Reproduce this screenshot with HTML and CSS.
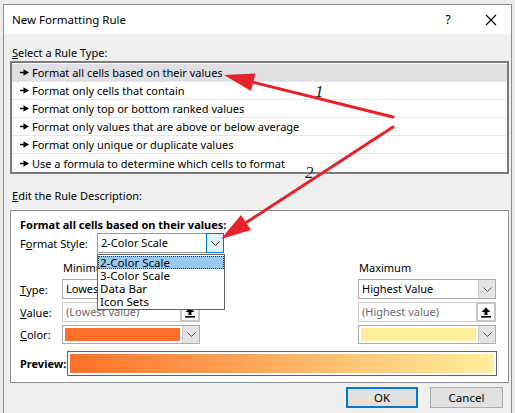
FILE: index.html
```html
<!DOCTYPE html>
<html>
<head>
<meta charset="utf-8">
<link rel="stylesheet" href="styles.css">
</head>
<body>
<div class="dialog">
  <div class="titlebar">
    <span class="title">New Formatting Rule</span>
    <span class="help">?</span>
    <span class="close"><svg width="12" height="12" viewBox="0 0 12 12"><path d="M1 1L11 11M11 1L1 11" stroke="#000" stroke-width="1.1" fill="none"/></svg></span>
  </div>
  <div class="content">
    <div class="section-label"><u>S</u>elect a Rule Type:</div>
    <div class="listbox">
      <div class="item selected"><svg class="bullet" width="9" height="7" viewBox="0 0 9 7"><path d="M0 3.5H4.5" stroke="#000" stroke-width="1.5"/><path d="M3.5 0.3L9 3.5L3.5 6.7Z" fill="#000"/></svg>Format all cells based on their values</div>
      <div class="item"><svg class="bullet" width="9" height="7" viewBox="0 0 9 7"><path d="M0 3.5H4.5" stroke="#000" stroke-width="1.5"/><path d="M3.5 0.3L9 3.5L3.5 6.7Z" fill="#000"/></svg>Format only cells that contain</div>
      <div class="item"><svg class="bullet" width="9" height="7" viewBox="0 0 9 7"><path d="M0 3.5H4.5" stroke="#000" stroke-width="1.5"/><path d="M3.5 0.3L9 3.5L3.5 6.7Z" fill="#000"/></svg>Format only top or bottom ranked values</div>
      <div class="item"><svg class="bullet" width="9" height="7" viewBox="0 0 9 7"><path d="M0 3.5H4.5" stroke="#000" stroke-width="1.5"/><path d="M3.5 0.3L9 3.5L3.5 6.7Z" fill="#000"/></svg>Format only values that are above or below average</div>
      <div class="item"><svg class="bullet" width="9" height="7" viewBox="0 0 9 7"><path d="M0 3.5H4.5" stroke="#000" stroke-width="1.5"/><path d="M3.5 0.3L9 3.5L3.5 6.7Z" fill="#000"/></svg>Format only unique or duplicate values</div>
      <div class="item last"><svg class="bullet" width="9" height="7" viewBox="0 0 9 7"><path d="M0 3.5H4.5" stroke="#000" stroke-width="1.5"/><path d="M3.5 0.3L9 3.5L3.5 6.7Z" fill="#000"/></svg>Use a formula to determine which cells to format</div>
    </div>
    <div class="section-label edit"><u>E</u>dit the Rule Description:</div>
    <div class="group">
      <div class="heading">Format all cells based on their values:</div>
      <div class="style-row">
        <span class="style-label">F<u>o</u>rmat Style:</span>
        <div class="combo style-combo">
          <span class="combo-text">2-Color Scale</span>
          <span class="ddbtn active"><svg width="9" height="5" viewBox="0 0 9 5"><path d="M0.5 0.5L4.5 4.5L8.5 0.5" stroke="#333" fill="none"/></svg></span>
          <div class="droplist">
            <div class="opt sel">2-Color Scale</div>
            <div class="opt">3-Color Scale</div>
            <div class="opt">Data Bar</div>
            <div class="opt">Icon Sets</div>
          </div>
        </div>
      </div>
      <div class="grid">
        <span></span><span class="colhead">Minimum</span><span></span><span class="colhead">Maximum</span>

        <span class="rowlabel"><u>T</u>ype:</span>
        <div class="combo"><span class="combo-text">Lowest Value</span><span class="ddbtn"><svg width="9" height="5" viewBox="0 0 9 5"><path d="M0.5 0.5L4.5 4.5L8.5 0.5" stroke="#555" fill="none"/></svg></span></div>
        <span></span>
        <div class="combo"><span class="combo-text">Highest Value</span><span class="ddbtn"><svg width="9" height="5" viewBox="0 0 9 5"><path d="M0.5 0.5L4.5 4.5L8.5 0.5" stroke="#555" fill="none"/></svg></span></div>

        <span class="rowlabel"><u>V</u>alue:</span>
        <div class="valuebox"><span class="value-text">(Lowest value)</span><span class="refbtn"><svg width="10" height="11" viewBox="0 0 10 11"><path d="M5 0.5L9.5 5H6.5V8H3.5V5H0.5Z" fill="#000"/><rect x="0" y="9" width="10" height="1.6" fill="#000"/></svg></span></div>
        <span></span>
        <div class="valuebox"><span class="value-text">(Highest value)</span><span class="refbtn"><svg width="10" height="11" viewBox="0 0 10 11"><path d="M5 0.5L9.5 5H6.5V8H3.5V5H0.5Z" fill="#000"/><rect x="0" y="9" width="10" height="1.6" fill="#000"/></svg></span></div>

        <span class="rowlabel"><u>C</u>olor:</span>
        <div class="combo colorcombo"><span class="swatch orange"></span><span class="ddbtn"><svg width="9" height="5" viewBox="0 0 9 5"><path d="M0.5 0.5L4.5 4.5L8.5 0.5" stroke="#555" fill="none"/></svg></span></div>
        <span></span>
        <div class="combo colorcombo"><span class="swatch yellow"></span><span class="ddbtn"><svg width="9" height="5" viewBox="0 0 9 5"><path d="M0.5 0.5L4.5 4.5L8.5 0.5" stroke="#555" fill="none"/></svg></span></div>
      </div>
      <div class="preview-row">
        <span class="preview-label">Preview:</span>
        <div class="preview-box"><div class="gradient"></div></div>
      </div>
    </div>
    <div class="buttons">
      <button class="btn ok">OK</button>
      <button class="btn">Cancel</button>
    </div>
  </div>
</div>
<svg class="annot" width="515" height="413" viewBox="0 0 515 413">
  <line x1="393" y1="117" x2="252" y2="82" stroke="#e8222b" stroke-width="3" stroke-linecap="round"/>
  <polygon points="224,75 255.5,73.5 251,91" fill="#e8222b"/>
  <line x1="393" y1="127" x2="247" y2="222" stroke="#e8222b" stroke-width="3" stroke-linecap="round"/>
  <polygon points="221,239 241,215 251,230" fill="#e8222b"/>
  <text x="315" y="97" class="num">1</text>
  <text x="305" y="178" class="num">2</text>
</svg>
</body>
</html>
```
FILE: styles.css
```css
* { box-sizing: border-box; }
body {
  margin: 0;
  padding: 4px 0 0 3px;
  width: 515px;
  height: 413px;
  overflow: hidden;
  position: relative;
  background: #ececec;
  font-family: "Noto Sans", sans-serif;
  font-size: 11px;
  color: #000;
}
u { text-decoration: underline; text-underline-offset: 1px; }
.dialog {
  width: 509px;
  height: 409px;
  border: 1px solid #8c8c8c;
  border-bottom: none;
  background: #f0f0f0;
}
.titlebar {
  height: 29px;
  background: #fff;
  display: flex;
  align-items: center;
  padding-left: 8px;
}
.title { flex: 1; font-size: 11.5px; }
.help { width: 20px; text-align: center; margin-right: 13px; font-size: 12px; }
.close { width: 40px; display: flex; justify-content: center; align-items: center; }
.content { padding: 0 2px 0 6px; }
.section-label { padding: 11px 0 0 2px; line-height: 16px; height: 27px; }
.section-label.edit { padding-top: 14px; height: 33px; }
.listbox {
  border: 2px solid #7b7b7b;
  padding-top: 1px;
  background: #fff;
  height: 113px;
}
.item {
  height: 18px;
  display: flex;
  align-items: center;
  padding-left: 8px;
  border-bottom: 1px solid #e8e8e8;
  white-space: nowrap;
}
.item.last { border-bottom: none; }
.item.selected { background: #e0dfe4; }
.bullet { margin-right: 3px; flex: none; }
.group {
  margin-top: 3px;
  border: 1px solid #8f8f8f;
  background: #fff;
  padding: 6px 0 5px 9px;
  height: 173px;
}
.heading { font-weight: bold; line-height: 16px; height: 16px; }
.style-row {
  display: flex;
  align-items: center;
  height: 20px;
  margin-top: 0;
}
.style-label { width: 77px; }
.combo {
  position: relative;
  display: flex;
  align-items: stretch;
  border: 1px solid #adadad;
  background: #fff;
  height: 20px;
}
.style-combo { width: 127px; border-color: #9a9a9a; }
.combo-text { flex: 1; padding-left: 3px; line-height: 18px; white-space: nowrap; overflow: hidden; }
.ddbtn {
  width: 17px;
  flex: none;
  display: flex;
  align-items: center;
  justify-content: center;
  background: #e3e3e3;
  border-left: 1px solid #c8c8c8;
}
.ddbtn.active {
  background: #e5f1fb;
  border: 1px solid #0078d7;
  margin: -1px -1px -1px 0;
  width: 18px;
}
.droplist {
  position: absolute;
  top: 20px;
  left: -1px;
  width: 128px;
  border: 1px solid #646464;
  background: #fff;
  padding: 1px 0 1px 0;
  z-index: 2;
}
.opt { height: 13px; line-height: 13px; padding-left: 2px; white-space: nowrap; font-size: 11.5px; }
.opt.sel { background: #99c9ef; outline: 1px dotted #333; outline-offset: -1px; }
.grid {
  display: grid;
  grid-template-columns: 42px 138px 158px 138px;
  grid-template-rows: 16px 20px 20px 19px;
  row-gap: 3px;
  margin-top: 7px;
}
.colhead { padding-left: 1px; line-height: 16px; }
.rowlabel { display: flex; align-items: center; }
.valuebox {
  display: flex;
  border: 1px solid #cccccc;
  background: #fff;
}
.value-text { flex: 1; color: #6d6d6d; padding-left: 3px; line-height: 18px; white-space: nowrap; overflow: hidden; }
.refbtn {
  width: 20px;
  flex: none;
  border: 2px solid #c4c4c4;
  margin: -1px -1px -1px 0;
  display: flex;
  align-items: center;
  justify-content: center;
  background: #fff;
}
.colorcombo { height: 19px; }
.swatch { flex: 1; margin: 2px; }
.swatch.orange { background: #ff7128; }
.swatch.yellow { background: #ffef9c; }
.preview-row {
  display: flex;
  align-items: center;
  margin-top: 7px;
}
.preview-label { width: 47px; font-weight: bold; }
.preview-box {
  width: 430px;
  height: 25px;
  border: 1px solid #646464;
  padding: 2px;
  background: #fff;
}
.gradient { height: 100%; background: linear-gradient(to right, #ff7128, #ffef9c); }
.buttons {
  display: flex;
  justify-content: flex-end;
  gap: 12px;
  padding-right: 6px;
  margin-top: 4px;
}
.btn {
  width: 73px;
  height: 21px;
  background: #e1e1e1;
  border: 1px solid #adadad;
  font-family: "Noto Sans", sans-serif;
  font-size: 11.5px;
  color: #000;
  padding: 0;
}
.btn.ok { width: 72px; border: 2px solid #0078d7; }
.annot { position: absolute; left: 0; top: 0; pointer-events: none; }
.num { font-family: "Liberation Serif", serif; font-style: italic; font-size: 17px; fill: #141432; }
```
